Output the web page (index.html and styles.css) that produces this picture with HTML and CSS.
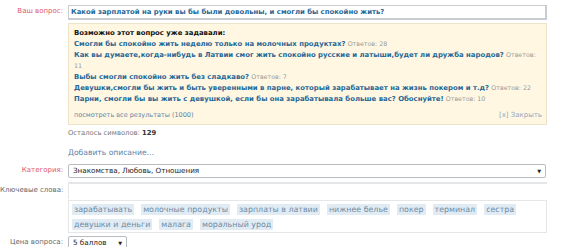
FILE: index.html
```html
<!DOCTYPE html>
<html lang="ru">
<head>
    <meta charset="UTF-8">
    <title>Задать вопрос</title>
    <link rel="stylesheet" href="styles.css">
</head>
<body>

<div class="ask-form">
    <div class="row">
        <label class="lbl required" for="q">Ваш вопрос:</label>
        <div class="field">
            <input class="q-input" id="q" type="text" value="Какой зарплатой на руки вы бы были довольны, и смогли бы спокойно жить?">
            <div class="similar">
                <div class="similar-title">Возможно этот вопрос уже задавали:</div>
                <div class="similar-item"><a href="#">Смогли бы спокойно жить неделю только на молочных продуктах?</a> <span class="cnt">Ответов: 28</span></div>
                <div class="similar-item"><a href="#">Как вы думаете,когда-нибудь в Латвии смог жить спокойно русские и латыши,будет ли дружба народов?</a> <span class="cnt">Ответов: 11</span></div>
                <div class="similar-item"><a href="#">Выбы смогли спокойно жить без сладкаво?</a> <span class="cnt">Ответов: 7</span></div>
                <div class="similar-item"><a href="#">Девушки,смогли бы жить и быть уверенными в парне, который зарабатывает на жизнь покером и т.д?</a> <span class="cnt">Ответов: 22</span></div>
                <div class="similar-item"><a href="#">Парни, смогли бы вы жить с девушкой, если бы она зарабатывала больше вас? Обоснуйте!</a> <span class="cnt">Ответов: 10</span></div>
                <div class="similar-foot">
                    <a class="all-link" href="#">посмотреть все результаты (1000)</a>
                    <a class="close-link" href="#">[x] Закрыть</a>
                </div>
            </div>
            <div class="chars-left">Осталось символов: <b>129</b></div>
            <a class="add-desc" href="#">Добавить описание...</a>
        </div>
    </div>

    <div class="row row-cat">
        <label class="lbl required">Категория:</label>
        <div class="field">
            <div class="select wide">Знакомства, Любовь, Отношения<span class="arrow">&#9660;</span></div>
        </div>
    </div>

    <div class="row row-kw">
        <label class="lbl">Ключевые слова:</label>
        <div class="field">
            <div class="kw-input"></div>
            <div class="tags">
                <span class="tag">зарабатывать</span>
                <span class="tag">молочные продукты</span>
                <span class="tag">зарплаты в латвии</span>
                <span class="tag">нижнее белье</span>
                <span class="tag">покер</span>
                <span class="tag">терминал</span>
                <span class="tag">сестра</span>
                <span class="tag">девушки и деньги</span>
                <span class="tag">малага</span>
                <span class="tag">моральный урод</span>
            </div>
        </div>
    </div>

    <div class="row row-price">
        <label class="lbl">Цена вопроса:</label>
        <div class="field">
            <div class="select small">5 баллов<span class="arrow">&#9660;</span></div>
        </div>
    </div>
</div>

</body>
</html>
```

FILE: styles.css
```css
body {
    margin: 0;
    padding: 0;
    background: #fff;
    font-family: "DejaVu Sans", Verdana, sans-serif;
    font-size: 7px;
    color: #333;
}
a {
    text-decoration: none;
}
.ask-form {
    padding-top: 5px;
}
.row {
    display: flex;
    align-items: flex-start;
}
.lbl {
    width: 63px;
    flex: none;
    text-align: right;
    color: #666;
    font-size: 7px;
    line-height: 13px;
    white-space: nowrap;
}
.lbl.required {
    color: #e0566b;
}
.field {
    margin-left: 5px;
    width: 479px;
}
.q-input {
    display: block;
    box-sizing: border-box;
    width: 479px;
    height: 15px;
    margin: 0;
    padding: 0 2px;
    border: 1px solid #c9cdd2;
    border-right-width: 2px;
    border-bottom-width: 2px;
    font-family: inherit;
    font-size: 6.9px;
    font-weight: bold;
    color: #1f6796;
    outline: none;
}
.similar {
    margin-top: 3px;
    background: #fff7e2;
    border: 1px solid #ece3c9;
    padding: 4px 4px 3px 5px;
    line-height: 11px;
    font-size: 6.9px;
}
.similar-title {
    font-weight: bold;
    color: #111;
}
.similar-item a {
    font-weight: bold;
    color: #1f6796;
}
.cnt {
    color: #999;
    font-size: 6.3px;
    line-height: 0;
}
.similar-foot {
    display: flex;
    justify-content: space-between;
    margin-top: 5px;
    font-size: 6.5px;
}
.all-link {
    color: #5b82a8;
}
.close-link {
    color: #8fa7bf;
    font-size: 7px;
}
.chars-left {
    margin-top: 3px;
    line-height: 11px;
    font-size: 6.8px;
    color: #777;
}
.chars-left b {
    color: #333;
}
.add-desc {
    display: block;
    margin-top: 8px;
    line-height: 11px;
    font-size: 7.6px;
    color: #5b82a8;
}
.row-cat {
    margin-top: 6px;
}
.select {
    box-sizing: border-box;
    height: 14px;
    border: 1px solid #b8bcc1;
    border-radius: 2px;
    padding: 0 4px;
    line-height: 12px;
    font-size: 7.2px;
    color: #222;
    position: relative;
    background: #fff;
}
.select.wide {
    width: 478px;
}
.select.small {
    width: 59px;
}
.arrow {
    position: absolute;
    right: 4px;
    top: 0;
    font-size: 5px;
    color: #222;
}
.row-kw {
    margin-top: 4px;
}
.row-kw .lbl {
    padding-top: 2px;
}
.kw-input {
    box-sizing: border-box;
    height: 17px;
    border-top: 2px solid #e4e6e8;
    border-left: 1px solid #e4e6e8;
}
.tags {
    box-sizing: border-box;
    margin-top: 1px;
    height: 33px;
    border: 1px solid #e4e6e8;
    padding: 3px 2px 0 3px;
    display: flex;
    flex-wrap: wrap;
    gap: 4px 7px;
    align-content: flex-start;
}
.tag {
    background: #e1ebf3;
    color: #6d8aa3;
    font-size: 7.9px;
    line-height: 11px;
    padding: 0 2px;
}
.row-price {
    margin-top: 3px;
}
```
